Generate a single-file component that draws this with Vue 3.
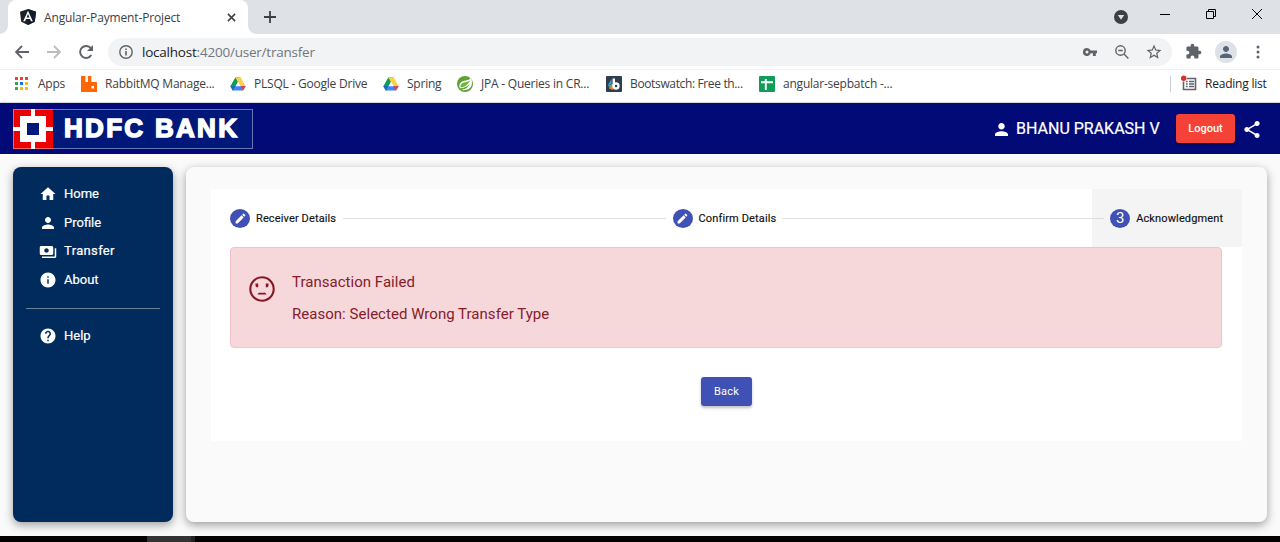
<script setup>
const bookmarks = [
  { icon: 'apps', label: 'Apps' },
  { icon: 'rabbit', label: 'RabbitMQ Manage...' },
  { icon: 'drive', label: 'PLSQL - Google Drive' },
  { icon: 'drive', label: 'Spring' },
  { icon: 'leaf', label: 'JPA - Queries in CR...' },
  { icon: 'boot', label: 'Bootswatch: Free th...' },
  { icon: 'sheet', label: 'angular-sepbatch -...' },
]
const dots = ['#ea4335', '#ea4335', '#ea4335', '#34a853', '#1a73e8', '#fbbc04', '#34a853', '#fbbc04', '#fbbc04']
const person = 'M12 12c2.21 0 4-1.79 4-4s-1.79-4-4-4-4 1.790-4 4 1.790 4 4 4zm0 2c-2.670 0-8 1.340-8 4v2h16v-2c0-2.660-5.330-4-8-4z'
const pencil = 'M3 17.250V21h3.750L17.810 9.940l-3.750-3.750L3 17.250zM20.710 7.040c.390-.390.390-1.020 0-1.410l-2.340-2.340c-.390-.390-1.020-.390-1.410 0l-1.830 1.830 3.750 3.750 1.830-1.830z'
const menu = [
  { label: 'Home', cls: 'm-home', path: 'M10 20v-6h4v6h5v-8h3L12 3 2 12h3v8z' },
  { label: 'Profile', cls: 'm-profile', path: person },
  { label: 'Transfer', cls: 'm-transfer', path: 'M19 14V6c0-1.100-.900-2-2-2H3c-1.100 0-2 .900-2 2v8c0 1.100.900 2 2 2h14c1.100 0 2-.900 2-2zM10 13c-1.660 0-3-1.340-3-3s1.340-3 3-3 3 1.340 3 3-1.340 3-3 3zm13-6v11c0 1.100-.900 2-2 2H4v-2h17V7h2z' },
  { label: 'About', cls: 'm-about', path: 'M12 2C6.480 2 2 6.480 2 12s4.480 10 10 10 10-4.480 10-10S17.520 2 12 2zm1 15h-2v-6h2v6zm0-8h-2V7h2v2z' },
]
const help = 'M12 2C6.480 2 2 6.480 2 12s4.480 10 10 10 10-4.480 10-10S17.520 2 12 2zm1 17h-2v-2h2v2zm2.070-7.750l-.900.920C13.450 12.900 13 13.500 13 15h-2v-.500c0-1.100.450-2.100 1.170-2.830l1.240-1.260c.370-.360.590-.860.590-1.410 0-1.100-.900-2-2-2s-2 .900-2 2H8c0-2.210 1.790-4 4-4s4 1.790 4 4c0 .880-.360 1.680-.930 2.250z'
</script>

<template>
  <div class="screen">
    <div class="tabs">
      <div class="tab">
        <svg class="shield" viewBox="0 0 16 16"><path d="M8 0l8 2.700-1.200 10L8 16l-6.800-3.300L0 2.700z" fill="#202124" /><path d="M8 0l8 2.700-1.200 10L8 16z" fill="#111a2c" /><path d="M8 1.800L3.200 12.300H5l1-2.400h4l1 2.400h1.800zM8 5l1.400 3.400H6.600z" fill="#fff" /></svg>
        <span class="tab-title">Angular-Payment-Project</span>
        <svg class="tab-x" viewBox="0 0 10 10"><path d="M1 1l8 8M9 1L1 9" stroke="#3c4043" stroke-width="1.700" /></svg>
      </div>
      <svg class="plus" viewBox="0 0 12 12"><path d="M6 0v12M0 6h12" stroke="#3c4043" stroke-width="1.800" /></svg>
      <div class="win">
        <svg width="14" height="14" viewBox="0 0 14 14"><circle cx="7" cy="7" r="7" fill="#3c4043" /><path d="M3.800 5h6.400L7 9.700z" fill="#dee1e6" /></svg>
        <svg width="10" height="10" viewBox="0 0 10 10"><path d="M0 5.500h10" stroke="#000" /></svg>
        <svg width="10" height="10" viewBox="0 0 10 10"><path d="M.5 2.500h7v7h-7zM2.500 2.500v-2h7v7h-2" fill="none" stroke="#000" /></svg>
        <svg width="10" height="10" viewBox="0 0 10 10"><path d="M0 0l10 10M10 0L0 10" stroke="#000" /></svg>
      </div>
    </div>

    <div class="toolbar">
      <svg class="nav" viewBox="0 0 14 14"><path d="M14 7H1M7 1L1 7l6 6" fill="none" stroke="#5f6368" stroke-width="1.800" /></svg>
      <svg class="nav" viewBox="0 0 14 14"><path d="M0 7h13M7 1l6 6-6 6" fill="none" stroke="#babcbe" stroke-width="1.800" /></svg>
      <svg class="nav" viewBox="0 0 14 14"><path d="M12.300 10A6 6 0 1 1 11.800 3.200" fill="none" stroke="#5f6368" stroke-width="1.900" /><path d="M14 0v6H8z" fill="#5f6368" /></svg>
      <div class="omni">
        <svg class="info" viewBox="0 0 14 14"><circle cx="7" cy="7" r="6.200" fill="none" stroke="#5f6368" stroke-width="1.400" /><path d="M7 6v4.500M7 3.400V5" stroke="#5f6368" stroke-width="1.600" /></svg>
        <span class="url"><b>localhost</b>:4200/user/transfer</span>
        <svg class="key" viewBox="0 0 14 8"><path fill-rule="evenodd" d="M4 0a4 4 0 0 1 3.700 2.600H14v2.700h-1.200V8h-2.900V5.300H7.700A4 4 0 1 1 4 0zm0 2.500a1.500 1.500 0 1 0 0 3 1.500 1.500 0 0 0 0-3z" fill="#5f6368" /></svg>
        <svg class="mag" viewBox="0 0 14 14"><circle cx="5.500" cy="5.500" r="4.700" fill="none" stroke="#5f6368" stroke-width="1.400" /><path d="M3.200 5.500h4.600M9 9l4.400 4.400" stroke="#5f6368" stroke-width="1.400" /></svg>
        <svg class="star" viewBox="0 0 24 24"><path d="M22 9.240l-7.190-.620L12 2 9.190 8.630 2 9.240l5.460 4.730L5.820 21 12 17.270 18.180 21l-1.630-7.030L22 9.240zM12 15.400l-3.760 2.270 1-4.280-3.320-2.880 4.380-.380L12 6.100l1.710 4.040 4.380.380-3.320 2.880 1 4.280L12 15.400z" fill="#5f6368" /></svg>
      </div>
      <svg class="puzzle" viewBox="0 0 24 24"><path d="M20.500 11H19V7c0-1.100-.900-2-2-2h-4V3.500C13 2.120 11.880 1 10.500 1S8 2.120 8 3.500V5H4c-1.100 0-1.990.900-1.990 2v3.800H3.500c1.490 0 2.700 1.210 2.700 2.700s-1.210 2.700-2.700 2.700H2V20c0 1.100.900 2 2 2h3.800v-1.500c0-1.490 1.210-2.700 2.700-2.700 1.490 0 2.700 1.210 2.700 2.700V22H17c1.100 0 2-.900 2-2v-4h1.500c1.380 0 2.500-1.120 2.500-2.500S21.880 11 20.500 11z" fill="#5f6368" /></svg>
      <div class="avatar"><svg viewBox="0 0 24 24"><path :d="person" fill="#56637a" /></svg></div>
      <svg class="kebab" viewBox="0 0 4 14"><circle cx="2" cy="2" r="1.500" /><circle cx="2" cy="7" r="1.500" /><circle cx="2" cy="12" r="1.500" /></svg>
    </div>

    <div class="bookmarks">
      <div v-for="(b, i) in bookmarks" :key="i" class="bm" :class="'bm-' + b.icon">
        <svg viewBox="0 0 16 16">
          <template v-if="b.icon === 'apps'">
            <rect v-for="(c, n) in dots" :key="n" :x="1 + (n % 3) * 5" :y="1 + Math.floor(n / 3) * 5" width="3" height="3" :fill="c" />
          </template>
          <path v-else-if="b.icon === 'rabbit'" fill-rule="evenodd" d="M.6 0h3.200q.6 0 .6.600V6h2.500V.600q0-.6.600-.600h2.300q.6 0 .6.600V6h5q.6 0 .6.600v8.800q0 .6-.6.600H.600q-.6 0-.6-.600V.600Q0 0 .6 0zM10.500 10v2.500H13V10z" fill="#f60" />
          <template v-else-if="b.icon === 'drive'">
            <path d="M5.300 1.500h5.400L8 6.200 3 15 .3 10.300z" fill="#0f9d58" /><path d="M5.300 1.500h5.400l5 8.800h-5.300z" fill="#ffcf48" /><path d="M3 14.600l2.700-4.500h10L13 14.600z" fill="#4285f4" /><path d="M.3 10.200L3 14.600l2.600-4.500z" fill="#1967d2" /><path d="M10.500 10.200h5.200L13 14.600z" fill="#ea4335" /><path d="M8 5.700l2.500 4.500h-5z" fill="#fff" />
          </template>
          <template v-else-if="b.icon === 'leaf'">
            <circle cx="8" cy="8" r="8" fill="#5fa134" /><path d="M14.100 1.500C13 4 9.500 4.200 6.500 5 2.700 6.100 1.500 9.500 3 12.300c4-.1 7.500-1.500 9.400-4.500C11.600 11.700 8 13.600 4 13.800c5.500 1.500 10-1.300 10.800-5.300.5-2.500-.1-4.800-.7-7z" fill="#fff" /><path d="M13.500 3.500C12 6 9 6 7 6.500 4 7.200 3 9.300 3.700 11.400 8 11 11 9 13.500 3.500z" fill="#6db33f" />
          </template>
          <template v-else-if="b.icon === 'boot'">
            <rect width="16" height="16" rx="1" fill="#2c3e50" /><path d="M5.500 3v5L2 9z" fill="#4aa3df" /><path d="M2 9l5-1-3 5z" fill="#28b78d" /><path d="M3 12.500L7 8v6z" fill="#f47c3c" /><path d="M7.800 2.500V11" stroke="#fff" stroke-width="2.400" /><circle cx="10" cy="10" r="2.500" fill="none" stroke="#fff" stroke-width="2.300" />
          </template>
          <template v-else>
            <rect width="16" height="16" rx="1" fill="#0f9d58" /><path d="M6.800 3v11M2 6.300h12" stroke="#fff" stroke-width="1.900" />
          </template>
        </svg>
        <span>{{ b.label }}</span>
      </div>
      <div class="reading">
        <svg viewBox="0 0 16 16"><path d="M2.500 2.500h12v11h-12z" fill="none" stroke="#5f6368" stroke-width="1.600" /><path d="M5 5.500h1.700M5 8h1.700M5 10.500h1.700M8 5.500h5M8 8h5M8 10.500h5" stroke="#5f6368" stroke-width="1.400" /><circle cx="2.700" cy="2.300" r="3.300" fill="#fff" /><circle cx="2.700" cy="2.300" r="2.700" fill="#d93025" /></svg>
        <span>Reading list</span>
      </div>
    </div>

    <header class="bank">
      <div class="logo">
        <svg viewBox="0 0 40 40"><path d="M0 0h40v40H0z" fill="#ed0000" /><path d="M18 0h4v40h-4zM0 18h40v4H0z" fill="#fff" /><path d="M7 7h26v26H7z" fill="#fff" /><path d="M14 14h12v12H14z" fill="#00187a" /><path d="M40 .5H.5v39H40" fill="none" stroke="#fff" stroke-opacity=".4" /></svg>
        <span>HDFC BANK</span>
      </div>
      <svg class="user-icon" viewBox="4 4 16 16"><path :d="person" fill="#fff" /></svg>
      <span class="user">BHANU PRAKASH V</span>
      <button class="logout">Logout</button>
      <svg class="share" viewBox="3 2 18 20"><path d="M18 16.080c-.760 0-1.440.300-1.960.770L8.910 12.700c.050-.230.090-.460.090-.700s-.040-.470-.090-.700l7.050-4.110c.540.500 1.250.810 2.040.810 1.660 0 3-1.340 3-3s-1.340-3-3-3-3 1.340-3 3c0 .240.040.470.090.700L8.040 9.810C7.500 9.310 6.790 9 6 9c-1.660 0-3 1.340-3 3s1.340 3 3 3c.790 0 1.500-.310 2.040-.810l7.120 4.160c-.050.210-.080.430-.080.650 0 1.610 1.310 2.920 2.920 2.920s2.920-1.310 2.920-2.920-1.310-2.920-2.920-2.920z" fill="#fff" /></svg>
    </header>

    <main class="page">
      <nav class="side">
        <a v-for="m in menu" :key="m.label" :class="m.cls"><svg viewBox="0 0 24 24"><path :d="m.path" fill="#fff" /></svg><span>{{ m.label }}</span></a>
        <hr />
        <a class="m-help"><svg viewBox="0 0 24 24"><path :d="help" fill="#fff" /></svg><span>Help</span></a>
      </nav>
      <section class="card">
        <div class="stepper">
          <div class="steps">
            <div class="step"><i><svg viewBox="0 0 24 24"><path :d="pencil" fill="#fff" /></svg></i><span class="s1">Receiver Details</span></div>
            <div class="line l1"></div>
            <div class="step"><i><svg viewBox="0 0 24 24"><path :d="pencil" fill="#fff" /></svg></i><span class="s2">Confirm Details</span></div>
            <div class="line l2"></div>
            <div class="step active"><i>3</i><span class="s3">Acknowledgment</span></div>
          </div>
          <div class="alert">
            <svg viewBox="0 0 26 26"><circle cx="13" cy="13" r="11.700" fill="none" stroke="#851923" stroke-width="2.100" /><path d="M6.500 7.500h2.700v3.700H7.500L6.500 10zM16.800 7.500h2.700V10l-1 1.200h-1.700zM9.800 16.700h6.400l1.300 1.800h-9z" fill="#851923" /></svg>
            <div><p class="a1">Transaction Failed</p><p class="a2">Reason: Selected Wrong Transfer Type</p></div>
          </div>
          <button class="back">Back</button>
        </div>
      </section>
    </main>
    <footer class="taskbar"><div></div></footer>
  </div>
</template>

<style>
body { background: #fafafa; overflow: hidden; }
</style>

<style scoped>
.screen { width: 1280px; height: 542px; display: flex; flex-direction: column; overflow: hidden; background: #fafafa; font-family: Roboto, sans-serif; }
.screen * { box-sizing: border-box; }
svg { display: block; flex: none; }
span { white-space: nowrap; }
.tabs, .toolbar, .bookmarks { font-family: "Open Sans", sans-serif; color: #3c4043; }
.tabs { height: 34px; flex: none; display: flex; background: #dee1e6; padding-left: 8px; }
.tab { position: relative; width: 240px; height: 34px; background: #fff; border-radius: 8px 8px 0 0; display: flex; align-items: center; padding-left: 12px; }
.tab::before, .tab::after { content: ''; position: absolute; bottom: 0; width: 8px; height: 8px; }
.tab::before { left: -8px; background: radial-gradient(circle at 0 0, transparent 7.500px, #fff 8px); }
.tab::after { right: -8px; background: radial-gradient(circle at 100% 0, transparent 7.500px, #fff 8px); }
.shield { width: 16px; height: 16px; }
.tab-title { margin-left: 8px; width: 183px; font-size: 12px; letter-spacing: -.15px; }
.tab-x { width: 9px; height: 9px; }
.plus { width: 12px; height: 12px; margin: 11px 0 0 16px; }
.win { margin-left: auto; display: flex; padding: 9px 18px 0 0; gap: 36px; }
.win svg:first-child { margin: 1px -4px 0 0; }
.toolbar { height: 36px; flex: none; background: #fff; border-bottom: 1px solid #f2f2f2; display: flex; align-items: center; padding-left: 15px; }
.nav { width: 14px; height: 14px; margin-right: 18px; }
.nav:nth-child(3) { margin-right: 15px; }
.omni { width: 1064px; height: 28px; border-radius: 14px; background: #f1f3f4; display: flex; align-items: center; padding-left: 11px; }
.info { width: 14px; height: 14px; }
.url { margin-left: 9px; width: 940px; font-size: 13.500px; color: #73777b; letter-spacing: -.22px; }
.url b { font-weight: 400; color: #202124; }
.key { width: 14px; height: 8px; margin-left: 1px; }
.mag { width: 14px; height: 14px; margin-left: 18px; }
.star { width: 18px; height: 18px; margin-left: 16px; }
.puzzle { width: 17px; height: 17px; margin-left: 13px; }
.avatar { width: 22px; height: 22px; border-radius: 50%; background: #dee1e6; margin-left: 13px; display: flex; align-items: center; justify-content: center; }
.avatar svg { width: 18px; height: 18px; }
.kebab { width: 4px; height: 14px; margin-left: 19px; fill: #5f6368; }
.bookmarks { height: 33px; flex: none; background: #fff; border-bottom: 1px solid #d5d7da; display: grid; grid-template-columns: 67px 149px 153px 74px 149px 153px 397px 1fr; padding: 0 0 4px 14px; align-items: center; font-size: 12px; letter-spacing: -.22px; }
.bm { display: flex; align-items: center; }
.bm svg { width: 16px; height: 16px; }
.bm span, .reading span { margin-left: 8px; margin-top: -1px; }
.bm-boot { letter-spacing: -.36px; }
.reading { display: flex; align-items: center; height: 16px; border-left: 1px solid #c8cacd; padding-left: 10px; margin-left: 14px; color: #202124; }
.reading svg { width: 16px; height: 16px; overflow: visible; }
.bank { height: 51px; flex: none; background: #020a78; display: flex; align-items: center; padding-left: 13px; color: #fff; }
.logo { width: 240px; height: 40px; border: 1px solid #6675b5; background: #00187a; display: flex; align-items: center; margin-right: 742px; }
.logo svg { width: 40px; height: 40px; margin: -1px 0 -1px -1px; }
.logo span { margin-left: 11px; font: 900 26px "Liberation Sans", sans-serif; letter-spacing: 2.300px; -webkit-text-stroke: 1.500px #fff; }
.user-icon { width: 13px; height: 13px; margin-top: 2px; }
.user { width: 160px; margin-left: 8px; font-size: 16px; -webkit-text-stroke: .2px #fff; }
button { border: 0; border-radius: 3px; padding: 0; color: #fff; font: 500 11px Roboto, sans-serif; box-shadow: 0 2px 3px rgba(0,0,0,.25); }
.logout { width: 59px; height: 29px; background: #f44336; }
.share { width: 16px; height: 17px; margin-left: 9px; margin-top: 2px; }
.page { height: 382px; flex: none; padding: 13px 13px 14px; display: flex; gap: 13px; }
.side, .card { border-radius: 8px; box-shadow: 0 3px 10px rgba(0,0,0,.38); height: 355px; }
.side { width: 160px; background: #002b5c; padding-top: 13px; color: #fff; font-size: 13px; }
.side a { display: flex; align-items: center; height: 28.700px; padding-left: 25.500px; }
.side svg { width: 18px; height: 18px; }
.side span { margin-left: 7.500px; margin-top: -2px; -webkit-text-stroke: .2px #fff; }
.m-transfer span { letter-spacing: .35px; }
.side hr { height: 1px; border: 0; background: #6c8097; margin: 13px 13px; }
.card { width: 1081px; background: #fafafa; padding: 22px 25px; }
.stepper { width: 1031px; height: 252px; background: #fff; }
.steps { height: 58px; display: flex; align-items: center; padding-left: 19px; font-size: 11px; color: #111; letter-spacing: .13px; -webkit-text-stroke: .15px #111; }
.step { display: flex; align-items: center; height: 58px; }
.step i { width: 20px; height: 19px; border-radius: 50%; background: #3f51b5; color: #fff; font: 400 15px Roboto, sans-serif; letter-spacing: 0; -webkit-text-stroke: 0; display: flex; align-items: center; justify-content: center; }
.step svg { width: 13px; height: 13px; }
.step span { margin-left: 6px; }
.s1 { width: 87px; } .s2 { width: 83px; }
.line { position: relative; height: 1px; background: #e0e0e0; }
.l1 { width: 323px; margin-right: 7px; }
.l2 { width: 311px; }
.l2::after { content: ''; position: absolute; left: 100%; width: 12px; height: 1px; background: #dcdcdc; z-index: 1; }
.active { width: 150px; background: #f4f4f4; padding-left: 18px; }
.active span { margin-left: 6px; }
.alert { width: 992px; height: 101px; margin-left: 19px; border: 1px solid #f3c2c8; border-radius: 4px; background: #f6d7da; display: flex; color: #85202b; padding: 28px 0 0 18px; }
.alert svg { width: 26px; height: 26px; }
.alert p { margin: 0 0 14px 17px; font-size: 15px; line-height: 18px; white-space: nowrap; letter-spacing: .03px; }
.alert > div { margin-top: -3px; }
.back { display: block; width: 51px; height: 29px; margin: 29px 0 0 490px; background: #3f51b5; font-weight: 400; letter-spacing: .2px; }
.taskbar { height: 6px; flex: none; background: #000; padding-left: 147px; }
.taskbar div { width: 48px; height: 6px; background: #333; border-right: 4px solid #222; }
</style>
